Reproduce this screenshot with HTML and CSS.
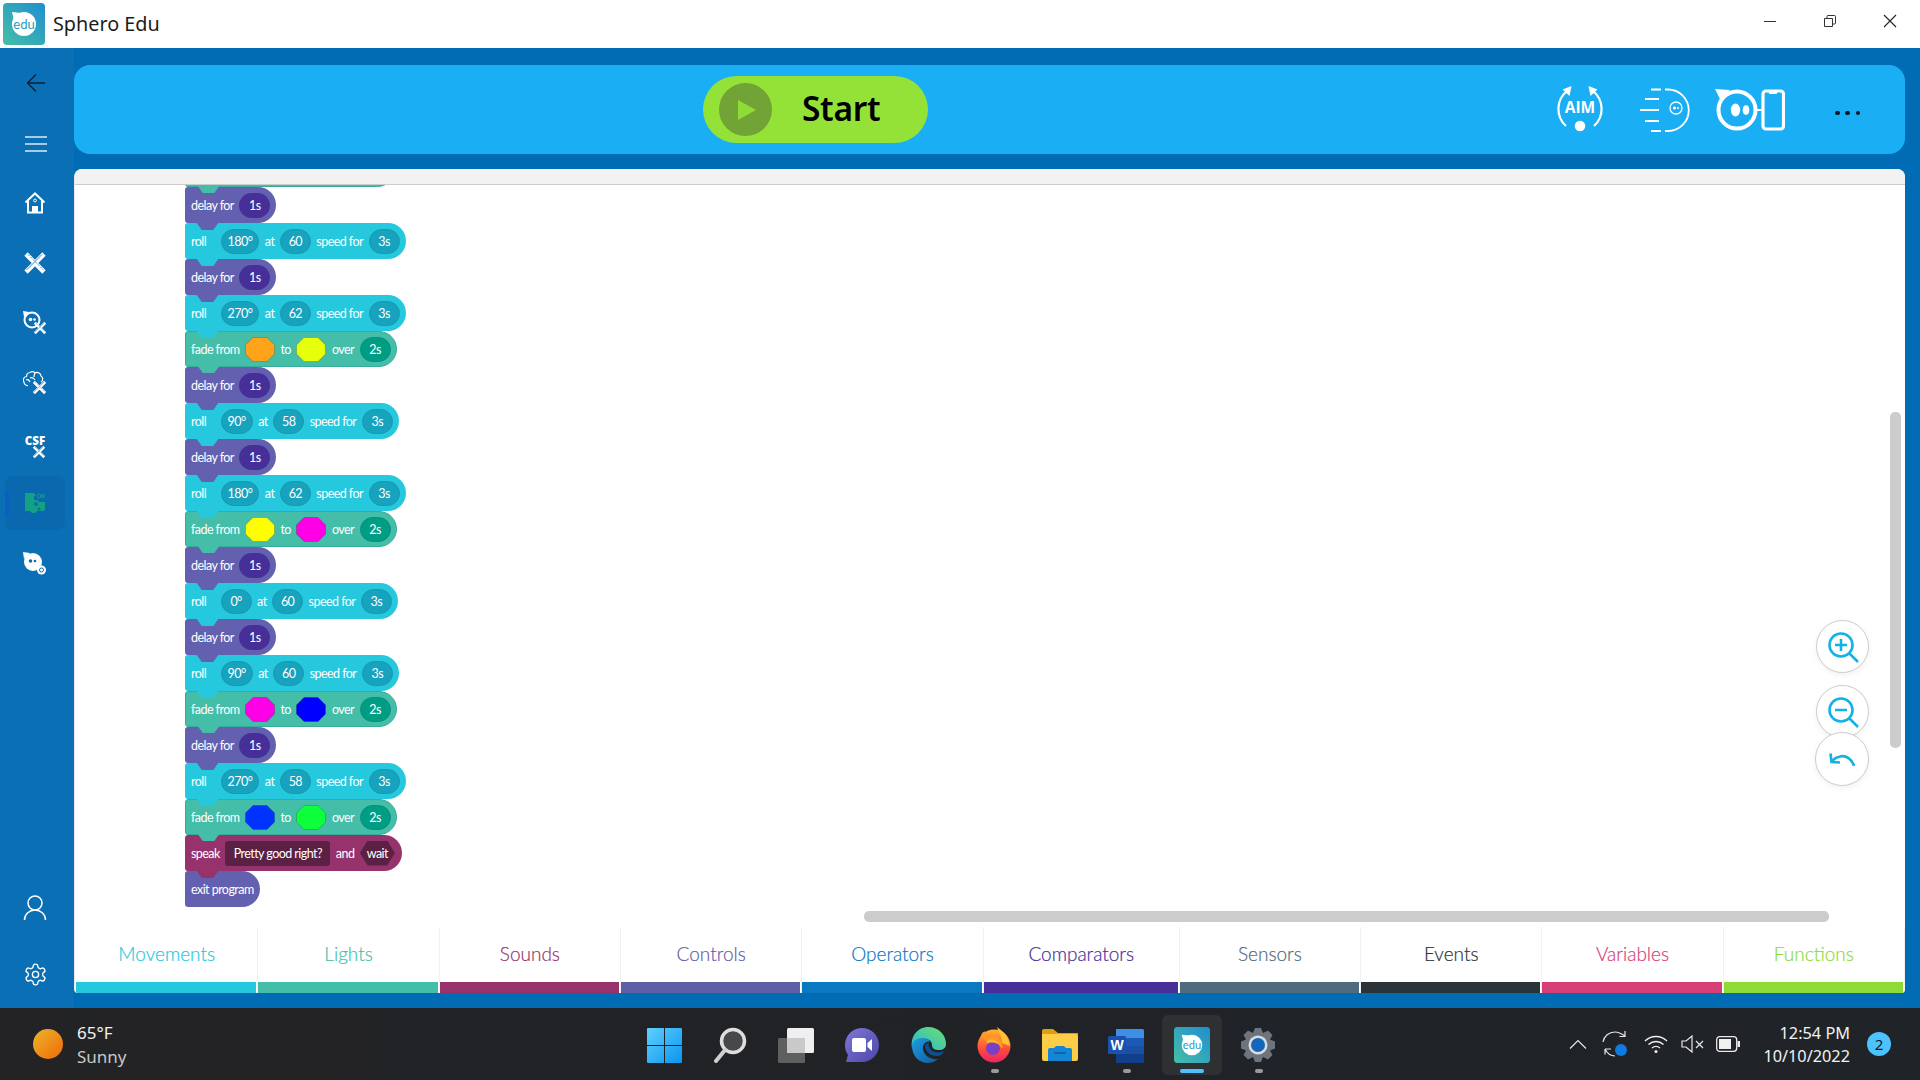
FILE: index.html
```html
<!DOCTYPE html>
<html lang="en">
<head>
  <meta charset="UTF-8" />
  <title>Sphero Edu</title>
  <link rel="stylesheet" href="styles.css">
</head>
<body>
  <svg class="svg-defs" aria-hidden="true">
    <defs>
      <linearGradient id="eduGrad" x1="1" y1="0" x2="0" y2="1">
        <stop offset="0" stop-color="#1f8fcf" />
        <stop offset="1" stop-color="#46bfa6" />
      </linearGradient>
      <linearGradient id="sunGrad" x1="0" y1="0" x2="1" y2="1">
        <stop offset="0" stop-color="#edb52b" />
        <stop offset="1" stop-color="#ee6a08" />
      </linearGradient>
      <linearGradient id="winGrad" x1="0" y1="0" x2="1" y2="1">
        <stop offset="0" stop-color="#5fd0ff" />
        <stop offset="1" stop-color="#0a95ee" />
      </linearGradient>
      <linearGradient id="chatGrad" x1="0" y1="0" x2="1" y2="1">
        <stop offset="0" stop-color="#7f78d8" />
        <stop offset="1" stop-color="#4b46a8" />
      </linearGradient>
      <linearGradient id="edgeGrad" x1="0" y1="0" x2="1" y2="1">
        <stop offset="0" stop-color="#1b9de2" />
        <stop offset="1" stop-color="#0f5aa0" />
      </linearGradient>
      <linearGradient id="edgeTop" x1="0" y1="1" x2="1" y2="0">
        <stop offset="0" stop-color="#23b6d8" />
        <stop offset="1" stop-color="#6fe06c" />
      </linearGradient>
      <linearGradient id="foxGrad" x1="0" y1="0" x2="0" y2="1">
        <stop offset="0" stop-color="#ffb52c" />
        <stop offset="0.6" stop-color="#ff4a3a" />
        <stop offset="1" stop-color="#e9256b" />
      </linearGradient>
      <symbol id="edu-logo" viewBox="0 0 42 42">
        <rect width="42" height="42" rx="4" fill="url(#eduGrad)" />
        <circle cx="21" cy="21" r="12" fill="#fff" />
        <path d="M9 9L18 10 11 17z" fill="#fff" />
        <text x="21" y="25.5" text-anchor="middle" class="edu-text">edu</text>
      </symbol>
      <symbol id="tool-x" viewBox="0 0 24 24">
        <path d="M3 3 L21 21 M21 3 L3 21" fill="none" stroke="#fff" stroke-width="4.6" />
        <path d="M5 3.500 L20.500 19" fill="none" stroke="#0a6db3" stroke-width="0.8" stroke-dasharray="2 1.500" />
        <path d="M19 3.500 L3.500 19" fill="none" stroke="#0a6db3" stroke-width="0.8" />
      </symbol>
      <symbol id="oct" viewBox="0 0 30 25">
        <polygon points="8,.5 22,.5 29.5,8 29.5,17 22,24.5 8,24.5 .5,17 .5,8" />
      </symbol>
    </defs>
  </svg>

  <div class="titlebar">
    <svg class="title-logo"><use href="#edu-logo" /></svg>
    <span class="title-text">Sphero Edu</span>
    <div class="win-controls">
      <div class="win-btn">
        <svg width="12" height="12" viewBox="0 0 12 12"><path d="M0 6.5H12" stroke="#333" fill="none" /></svg>
      </div>
      <div class="win-btn">
        <svg width="14" height="14" viewBox="0 0 14 14"><path d="M1.5 4.5h8v8h-8z M4 4.5V2.5a1 1 0 0 1 1-1h6.500a1 1 0 0 1 1 1V9a1 1 0 0 1-1 1h-2" stroke="#333" fill="none" /></svg>
      </div>
      <div class="win-btn">
        <svg width="14" height="14" viewBox="0 0 14 14"><path d="M1 1L13 13M13 1L1 13" stroke="#222" stroke-width="1.1" fill="none" /></svg>
      </div>
    </div>
  </div>

  <div class="app">
    <nav class="sidebar">
      <div class="nav-item">
        <svg class="nudge" width="20" height="20" viewBox="0 0 20 20"><path d="M19 10H2 M10 1.500L1.500 10 10 18.500" fill="none" stroke="#0d2236" stroke-width="1.500" /></svg>
      </div>
      <div class="nav-item">
        <svg class="nudge nudge-down" width="24" height="18" viewBox="0 0 24 18"><path d="M1 2H23 M1 9H23 M1 16H23" fill="none" stroke="#dbeaf5" stroke-width="1.500" /></svg>
      </div>
      <div class="nav-item">
        <svg width="22" height="22" viewBox="0 0 22 22">
          <path d="M1.500 10.500L11 1.500l9.500 9M4 9v11.500h14V9" fill="none" stroke="#fff" stroke-width="2" />
          <path d="M8 20.500v-6.500h6v6.500z" fill="#fff" />
          <circle cx="11" cy="8.500" r="1.400" fill="none" stroke="#fff" />
        </svg>
      </div>
      <div class="nav-item">
        <svg width="24" height="24"><use href="#tool-x" /></svg>
      </div>
      <div class="nav-item">
        <svg width="24" height="24" viewBox="0 0 24 24">
          <circle cx="9" cy="9" r="7.500" fill="none" stroke="#fff" stroke-width="2" />
          <path d="M0 0L6 1 1 6z" fill="#fff" />
          <circle cx="7.500" cy="8.500" r="1.800" fill="#fff" />
          <circle cx="11.500" cy="8.500" r="1.300" fill="#fff" />
          <svg x="10" y="10" width="14" height="14"><use href="#tool-x" /></svg>
        </svg>
      </div>
      <div class="nav-item">
        <svg width="24" height="24" viewBox="0 0 24 24">
          <path d="M7 1.500a4 4 0 0 1 5 .5 4 4 0 0 1 6 3 3.500 3.500 0 0 1 0 6 M7 1.500a4 4 0 0 0-3.500 4A3.500 3.500 0 0 0 1 11a3.500 3.500 0 0 0 4 3.500 M7 7c2-1 4 0 5 2 M3 9c2-1 3 0 4 2 M12 2c-1 2-1 3-1 4" fill="none" stroke="#fff" stroke-width="1.200" />
          <svg x="9" y="9" width="15" height="15"><use href="#tool-x" /></svg>
        </svg>
      </div>
      <div class="nav-item">
        <svg class="ico-csf" width="28" height="28" viewBox="0 -4 28 28">
          <text x="14" y="9.500" text-anchor="middle" class="csf-text">CSF</text>
          <svg x="11" y="10" width="14" height="14"><use href="#tool-x" /></svg>
        </svg>
      </div>
      <div class="nav-item nav-active">
        <span class="nav-mark"></span>
        <svg width="20" height="21" viewBox="0 0 20 21">
          <path d="M0 0h9l2 3h-2v4h3l2 2h6v8l-2 1h-6l-2 2H7l-2-2H0z" fill="#12a183" />
          <circle cx="14" cy="3" r="2" fill="none" stroke="#12a183" />
          <circle cx="18" cy="3" r="1.500" fill="none" stroke="#12a183" />
          <circle cx="11" cy="11" r="2" fill="#0a6db3" />
          <circle cx="14" cy="16" r="1.500" fill="#0a6db3" />
        </svg>
      </div>
      <div class="nav-item">
        <svg class="nudge-down" width="24" height="24" viewBox="0 0 24 24">
          <circle cx="10" cy="10" r="9" fill="#fff" />
          <path d="M0 0L7 1 1 7z" fill="#fff" />
          <circle cx="7.500" cy="9" r="1.800" fill="#0a6db3" />
          <circle cx="12" cy="9" r="1.300" fill="#0a6db3" />
          <circle cx="18.500" cy="18" r="4.500" fill="#fff" />
          <circle cx="18.500" cy="18" r="2" fill="none" stroke="#0a6db3" />
        </svg>
      </div>
      <div class="nav-item nav-user">
        <svg width="24" height="26" viewBox="0 0 24 26">
          <circle cx="12" cy="8" r="7" fill="none" stroke="#fff" stroke-width="1.500" />
          <path d="M1.500 25c0-6 5-10 10.500-10s10.500 4 10.500 10" fill="none" stroke="#fff" stroke-width="1.500" />
        </svg>
      </div>
      <div class="nav-item nav-gear">
        <svg width="25" height="25" viewBox="0 0 24 24" fill="none" stroke="#fff" stroke-width="1.300">
          <path d="M12.220 2h-.44a2 2 0 0 0-2 2v.18a2 2 0 0 1-1 1.730l-.43.250a2 2 0 0 1-2 0l-.15-.08a2 2 0 0 0-2.730.730l-.22.380a2 2 0 0 0 .730 2.730l.15.100a2 2 0 0 1 1 1.720v.510a2 2 0 0 1-1 1.740l-.15.090a2 2 0 0 0-.730 2.730l.22.380a2 2 0 0 0 2.730.730l.15-.08a2 2 0 0 1 2 0l.43.250a2 2 0 0 1 1 1.730V20a2 2 0 0 0 2 2h.44a2 2 0 0 0 2-2v-.18a2 2 0 0 1 1-1.730l.43-.25a2 2 0 0 1 2 0l.15.08a2 2 0 0 0 2.730-.73l.22-.39a2 2 0 0 0-.73-2.730l-.15-.08a2 2 0 0 1-1-1.740v-.5a2 2 0 0 1 1-1.740l.15-.09a2 2 0 0 0 .73-2.730l-.22-.38a2 2 0 0 0-2.730-.73l-.15.08a2 2 0 0 1-2 0l-.43-.25a2 2 0 0 1-1-1.730V4a2 2 0 0 0-2-2z" />
          <circle cx="12" cy="12" r="3" />
        </svg>
      </div>
    </nav>

    <main class="main">
      <header class="toolbar">
        <button class="start-btn">
          <span class="start-circle">
            <svg width="20" height="20" viewBox="0 0 20 20"><path d="M1 0L19 10 1 20z" fill="#8fdc38" /></svg>
          </span>
          <span class="start-label">Start</span>
        </button>
        <div class="tool-icons">
          <svg class="ico-aim" width="50" height="46" viewBox="0 0 50 46">
            <path d="M11 40A23 23 0 0 1 12 5M38 5A23 23 0 0 1 39 40" fill="none" stroke="#fff" stroke-width="2.200" />
            <path d="M16.500 0L14.500 10 7.500 3.500zM33.500 0L35.500 10l7-6.500z" fill="#fff" />
            <text x="25" y="27" text-anchor="middle" class="aim-text">AIM</text>
            <circle cx="25" cy="40" r="5.300" fill="#fff" />
          </svg>
          <svg class="ico-speed" width="51" height="44" viewBox="0 0 51 44">
            <path d="M12 1.500H22M6 11H20M1 22H20M6 33H20M12 43H22M26 1.500H29A20.700 20.700 0 0 1 29 43H26" fill="none" stroke="#fff" stroke-width="1.800" />
            <circle cx="37" cy="20" r="6" fill="none" stroke="#fff" stroke-width="1.300" />
            <circle cx="35.500" cy="20" r="1.500" fill="#fff" />
            <circle cx="39" cy="20" r="1" fill="#fff" />
          </svg>
          <svg class="ico-robot" width="70" height="42" viewBox="0 0 70 42">
            <circle cx="22" cy="21" r="18.500" fill="none" stroke="#fff" stroke-width="4" />
            <path d="M0 0L15 1 5 10z" fill="#fff" />
            <ellipse cx="20.500" cy="21" rx="4.700" ry="6.500" fill="#fff" />
            <ellipse cx="31" cy="21" rx="3.300" ry="4.800" fill="#fff" />
            <path d="M41 21H48" stroke="#fff" stroke-width="2" />
            <rect x="48" y="2" width="20.500" height="38" rx="3" fill="none" stroke="#fff" stroke-width="3.200" />
            <path d="M53 2.500h10l-1.500 2.500h-7z" fill="#fff" />
          </svg>
          <div class="more-dots"><span></span><span></span><span></span></div>
        </div>
      </header>

      <section class="panel">
        <div class="panel-strip"></div>
        <div class="canvas">
          <div class="block-list">
            <div class="block fade sliver"></div>

            <div class="block delay"><span>delay for</span><span class="pill">1s</span></div>
            <div class="block roll"><span class="roll-word">roll</span><span class="pill">180°</span><span>at</span><span class="pill">60</span><span>speed for</span><span class="pill">3s</span></div>
            <div class="block delay"><span>delay for</span><span class="pill">1s</span></div>
            <div class="block roll"><span class="roll-word">roll</span><span class="pill">270°</span><span>at</span><span class="pill">62</span><span>speed for</span><span class="pill">3s</span></div>
            <div class="block fade"><span>fade from</span><svg class="oct c-orange"><use href="#oct" /></svg><span>to</span><svg class="oct c-lime"><use href="#oct" /></svg><span>over</span><span class="pill">2s</span></div>
            <div class="block delay"><span>delay for</span><span class="pill">1s</span></div>
            <div class="block roll"><span class="roll-word">roll</span><span class="pill">90°</span><span>at</span><span class="pill">58</span><span>speed for</span><span class="pill">3s</span></div>
            <div class="block delay"><span>delay for</span><span class="pill">1s</span></div>
            <div class="block roll"><span class="roll-word">roll</span><span class="pill">180°</span><span>at</span><span class="pill">62</span><span>speed for</span><span class="pill">3s</span></div>
            <div class="block fade"><span>fade from</span><svg class="oct c-yellow"><use href="#oct" /></svg><span>to</span><svg class="oct c-magenta"><use href="#oct" /></svg><span>over</span><span class="pill">2s</span></div>
            <div class="block delay"><span>delay for</span><span class="pill">1s</span></div>
            <div class="block roll"><span class="roll-word">roll</span><span class="pill">0°</span><span>at</span><span class="pill">60</span><span>speed for</span><span class="pill">3s</span></div>
            <div class="block delay"><span>delay for</span><span class="pill">1s</span></div>
            <div class="block roll"><span class="roll-word">roll</span><span class="pill">90°</span><span>at</span><span class="pill">60</span><span>speed for</span><span class="pill">3s</span></div>
            <div class="block fade"><span>fade from</span><svg class="oct c-magenta"><use href="#oct" /></svg><span>to</span><svg class="oct c-blue"><use href="#oct" /></svg><span>over</span><span class="pill">2s</span></div>
            <div class="block delay"><span>delay for</span><span class="pill">1s</span></div>
            <div class="block roll"><span class="roll-word">roll</span><span class="pill">270°</span><span>at</span><span class="pill">58</span><span>speed for</span><span class="pill">3s</span></div>
            <div class="block fade"><span>fade from</span><svg class="oct c-blue2"><use href="#oct" /></svg><span>to</span><svg class="oct c-green"><use href="#oct" /></svg><span>over</span><span class="pill">2s</span></div>
            <div class="block speak"><span>speak</span><span class="say-box">Pretty good right?</span><span>and</span><span class="wait-hex">wait</span></div>
            <div class="block delay last"><span>exit program</span></div>
          </div>

          <div class="scroll-v"></div>
          <div class="scroll-h"></div>

          <div class="zoom-tools">
            <div class="zoom-btn">
              <svg width="34" height="34" viewBox="0 0 34 34" fill="none" stroke="#12b1e6" stroke-width="2.600"><circle cx="14" cy="14" r="11.500" /><path d="M22.500 22.500L31 31M14 8V20M8 14H20" /></svg>
            </div>
            <div class="zoom-btn">
              <svg width="34" height="34" viewBox="0 0 34 34" fill="none" stroke="#12b1e6" stroke-width="2.600"><circle cx="14" cy="14" r="11.500" /><path d="M22.500 22.500L31 31M8 14H20" /></svg>
            </div>
            <div class="zoom-btn reset-btn">
              <svg width="26" height="16" viewBox="0 0 26 16" fill="none" stroke="#12b1e6" stroke-width="2.600"><path d="M25 15C23 8 17 4 11 5.500 8 6 5 8 3 10" /><path d="M1.500 2.500L2.500 11 11 11.500" /></svg>
            </div>
          </div>
        </div>

        <div class="tabs">
          <div class="tab tab-movements"><span class="tab-label">Movements</span><span class="tab-bar"></span></div>
          <div class="tab tab-lights"><span class="tab-label">Lights</span><span class="tab-bar"></span></div>
          <div class="tab tab-sounds"><span class="tab-label">Sounds</span><span class="tab-bar"></span></div>
          <div class="tab tab-controls"><span class="tab-label">Controls</span><span class="tab-bar"></span></div>
          <div class="tab tab-operators"><span class="tab-label">Operators</span><span class="tab-bar"></span></div>
          <div class="tab tab-comparators"><span class="tab-label">Comparators</span><span class="tab-bar"></span></div>
          <div class="tab tab-sensors"><span class="tab-label">Sensors</span><span class="tab-bar"></span></div>
          <div class="tab tab-events"><span class="tab-label">Events</span><span class="tab-bar"></span></div>
          <div class="tab tab-variables"><span class="tab-label">Variables</span><span class="tab-bar"></span></div>
          <div class="tab tab-functions"><span class="tab-label">Functions</span><span class="tab-bar"></span></div>
        </div>
      </section>
    </main>
  </div>

  <footer class="taskbar">
    <div class="weather">
      <svg width="30" height="30" viewBox="0 0 30 30"><circle cx="15" cy="15" r="15" fill="url(#sunGrad)" /></svg>
      <div class="weather-text">
        <div class="temp">65°F</div>
        <div class="cond">Sunny</div>
      </div>
    </div>

    <div class="task-icons">
      <div class="task-item">
        <svg width="35" height="35" viewBox="0 0 35 35" fill="url(#winGrad)">
          <path d="M1 0H17V17H0V1a1 1 0 0 1 1-1zM18 0H34a1 1 0 0 1 1 1V17H18zM0 18H17V35H1a1 1 0 0 1-1-1zM18 18H35V34a1 1 0 0 1-1 1H18z" />
        </svg>
      </div>
      <div class="task-item">
        <svg width="34" height="36" viewBox="0 0 34 36">
          <circle cx="20" cy="14" r="11.500" fill="#48484a" stroke="#dedede" stroke-width="3.500" />
          <path d="M12 23L3 34" stroke="#d0d0d0" stroke-width="4" stroke-linecap="round" />
        </svg>
      </div>
      <div class="task-item">
        <svg width="36" height="35" viewBox="0 0 36 35">
          <rect x="9" y="0" width="27" height="25" rx="1.500" fill="#efefef" />
          <rect x="0" y="10" width="27" height="25" rx="1.500" fill="#6a6a6a" fill-opacity=".85" />
          <rect x="9" y="10" width="18" height="15" fill="#c9c9c9" />
        </svg>
      </div>
      <div class="task-item">
        <svg width="34" height="34" viewBox="0 0 34 34">
          <path d="M17 0C26 0 34 7 34 17S26 34 17 34H1L3 27C1 24 0 21 0 17 0 7 8 0 17 0z" fill="url(#chatGrad)" />
          <rect x="7" y="10" width="14" height="14" rx="2" fill="#fff" />
          <path d="M22.500 15L27 11V23L22.500 19z" fill="#fff" />
        </svg>
      </div>
      <div class="task-item">
        <svg width="36" height="36" viewBox="0 0 36 36">
          <path d="M18 0C29 0 36 8 36 17 36 21 33 23 29 23 24 23 22 21 22 18 22 13 17 11 12 12 6 14 3 18 2 21 0 9 8 0 18 0z" fill="url(#edgeTop)" />
          <path d="M2 19C2 15 6 11 12 11 16 11 20 13 20 15 16 14 13 17 13 21 13 28 20 33 28 32 24 35 21 36 18 36 8 36 2 28 2 19z" fill="url(#edgeGrad)" />
          <path d="M15 19C15 24 20 29 27 29 30 29 33 27 34 24 30 26 24 26 21 23 19 21 18 18 19 16 17 16 15 17 15 19z" fill="#0e4f94" />
        </svg>
      </div>
      <div class="task-item">
        <svg width="34" height="36" viewBox="0 0 34 36">
          <circle cx="17" cy="19" r="16.500" fill="url(#foxGrad)" />
          <path d="M20 0C27 5 32 10 33 19L25 16C25 10 22 6 20 0z" fill="#ffc233" />
          <path d="M4 8C6 4 8 4 9 5 7 8 8 10 11 11 15 9 21 10 24 14L26 21 10 15z" fill="#ff9a1f" />
          <circle cx="16" cy="21" r="7" fill="#7a3fc4" />
          <path d="M10 14C15 11 21 13 23 19 21 16 14 14 10 17z" fill="#ffb42a" />
        </svg>
      </div>
      <div class="task-item">
        <svg width="36" height="32" viewBox="0 0 36 32">
          <path d="M0 2a2 2 0 0 1 2-2H11L16 4H36V6H0z" fill="#d9a012" />
          <path d="M0 5H34a2 2 0 0 1 2 2V30a2 2 0 0 1-2 2H2a2 2 0 0 1-2-2z" fill="#fdcd48" />
          <path d="M6 32V21a2 2 0 0 1 2-2H12L14 17H22L24 19H28a2 2 0 0 1 2 2V32z" fill="#1586d6" />
          <path d="M12 24H24" stroke="#0c5a9e" stroke-width="1.500" />
        </svg>
      </div>
      <div class="task-item">
        <svg width="36" height="36" viewBox="0 0 36 36">
          <rect x="8" y="2" width="28" height="34" rx="2" fill="#2a6fd0" />
          <rect x="8" y="11" width="28" height="8" fill="#1d5ab8" />
          <rect x="8" y="19" width="28" height="8" fill="#1a4fa6" />
          <path d="M8 27H36V34a2 2 0 0 1-2 2H10a2 2 0 0 1-2-2z" fill="#123f8a" />
          <path d="M8 2H34a2 2 0 0 1 2 2V11H8z" fill="#3e8ee6" />
          <rect x="0" y="9" width="18" height="18" rx="1.500" fill="#1a50ae" />
          <text x="9" y="23" text-anchor="middle" class="word-text">W</text>
        </svg>
      </div>
      <div class="task-item task-active">
        <svg width="36" height="36"><use href="#edu-logo" /></svg>
        <span class="task-run"></span>
      </div>
      <div class="task-item">
        <svg width="36" height="36" viewBox="0 0 36 36">
          <path d="M15 1H21L23 6 28 3.500 32.500 8 30 12.500 35 14.500V21.500L30 23.500 32.500 28 28 32.500 23 30 21 35H15L13 30 8 32.500 3.500 28 6 23.500 1 21.500V14.500L6 12.500 3.500 8 8 3.500 13 6z" fill="#6d747c" />
          <circle cx="18" cy="18" r="9.500" fill="#d8dde2" />
          <circle cx="18" cy="18" r="7" fill="#1366b8" />
        </svg>
      </div>
      <span class="run-dot dot-fox"></span>
      <span class="run-dot dot-word"></span>
      <span class="run-dot dot-gear"></span>
    </div>

    <div class="tray">
      <svg class="tray-chevron" width="18" height="10" viewBox="0 0 18 10"><path d="M1 9.500L9 1.500l8 8" fill="none" stroke="#e8e8e8" stroke-width="1.200" /></svg>
      <svg class="tray-sync" width="26" height="26" viewBox="0 0 26 26">
        <path d="M1 11C2 5 7 1 13 1 17 1 20 3 23 5M23 0V5.500H17.500M3 18H9M3 18V23.500M3 18C5 22 8 25 13 25" fill="none" stroke="#e8e8e8" stroke-width="1.200" />
        <circle cx="19" cy="19" r="6" fill="#0f7ae0" />
      </svg>
      <svg class="tray-wifi" width="24" height="20" viewBox="0 0 24 20" fill="none" stroke="#f0f0f0" stroke-width="1.400">
        <path d="M1 7C7 1 17 1 23 7M4.500 10.500C9 6.500 15 6.500 19.500 10.500M8 14C10.500 12 13.500 12 16 14" />
        <circle cx="12" cy="17.500" r="1.500" fill="#f0f0f0" stroke="none" />
      </svg>
      <svg class="tray-sound" width="23" height="18" viewBox="0 0 23 18" fill="none" stroke="#e8e8e8" stroke-width="1.200">
        <path d="M1 6H5L11 1V17L5 12H1zM15 6L22 13M22 6L15 13" />
      </svg>
      <svg class="tray-battery" width="24" height="16" viewBox="0 0 24 16">
        <rect x=".7" y=".7" width="20" height="14.600" rx="3" fill="none" stroke="#e8e8e8" stroke-width="1.300" />
        <rect x="3" y="3" width="12" height="10" fill="#f0f0f0" />
        <rect x="21.500" y="5" width="2.500" height="6" fill="#e8e8e8" />
      </svg>
      <div class="clock">
        <div>12:54 PM</div>
        <div>10/10/2022</div>
      </div>
      <div class="badge">2</div>
    </div>
  </footer>
</body>
</html>
```

FILE: styles.css
```css
* {
  box-sizing: border-box;
}

body {
  margin: 0;
  width: 1920px;
  height: 1080px;
  overflow: hidden;
  font-family: "Noto Sans", sans-serif;
  background: #016cb3;
  display: flex;
  flex-direction: column;
}

.svg-defs {
  position: absolute;
  width: 0;
  height: 0;
}

.edu-text {
  font-family: Lato, sans-serif;
  font-size: 13px;
  fill: #1e9cc4;
}

/* title bar */

.titlebar {
  height: 48px;
  background: #fff;
  display: flex;
  align-items: center;
  padding-left: 3px;
}

.title-logo {
  width: 42px;
  height: 42px;
}

.title-text {
  margin: -2px 0 0 8px;
  font-size: 19.8px;
  color: #1c1c1c;
}

.win-controls {
  display: flex;
  margin-left: auto;
  align-self: flex-start;
}

.win-btn {
  width: 60px;
  height: 42px;
  display: flex;
  align-items: center;
  justify-content: center;
}

/* main app */

.app {
  flex: 1;
  display: flex;
  min-height: 0;
}

.sidebar {
  width: 74px;
  padding: 5px 9px 4px 5px;
  display: flex;
  flex-direction: column;
  background: #0a6fb5;
}

.nav-item {
  position: relative;
  width: 60px;
  height: 60px;
  flex-shrink: 0;
  display: flex;
  align-items: center;
  justify-content: center;
}

.nudge {
  margin-left: 2px;
}

.nudge-down {
  margin-top: 2px;
}

.ico-csf {
  margin-top: 4px;
}

.nav-active {
  height: 54px;
  margin: 3px 0;
  border-radius: 8px;
  background: #0a69ae;
}

.nav-mark {
  position: absolute;
  left: 0;
  top: 16px;
  width: 4px;
  height: 23px;
  background: #0b5fbd;
}

.nav-user {
  margin-top: auto;
}

.nav-gear {
  margin-top: 6px;
}

.csf-text {
  font-family: "Open Sans", sans-serif;
  font-weight: 800;
  font-size: 11.5px;
  fill: #fff;
}

.main {
  flex: 1;
  padding: 17px 15px 15px 0;
  display: flex;
  flex-direction: column;
  gap: 15px;
}

.toolbar {
  height: 89px;
  background: #1aaef4;
  border-radius: 16px;
  display: flex;
  align-items: center;
  padding: 0 45px 0 629px;
}

.start-btn {
  width: 225px;
  height: 67px;
  padding: 0 0 0 16px;
  border: none;
  border-radius: 34px;
  background: #94e238;
  display: flex;
  align-items: center;
  font-family: inherit;
}

.start-circle {
  width: 53px;
  height: 53px;
  border-radius: 50%;
  background: #72a336;
  display: flex;
  align-items: center;
  justify-content: center;
  padding-left: 3px;
}

.start-label {
  margin: -4px 0 0 30px;
  font-size: 33.5px;
  font-weight: 600;
  letter-spacing: -0.3px;
  color: #000;
}

.tool-icons {
  margin-left: auto;
  display: flex;
  align-items: center;
}

.ico-aim {
  margin-top: -2px;
}

.ico-speed {
  margin-left: 34px;
}

.ico-robot {
  margin-left: 25.5px;
}

.more-dots {
  margin: 7px 0 0 50px;
  width: 25px;
  display: flex;
  justify-content: space-between;
}

.more-dots span {
  width: 4.5px;
  height: 4.5px;
  border-radius: 50%;
  background: #0a1a26;
}

.aim-text {
  font-family: "Open Sans", sans-serif;
  font-weight: 700;
  font-size: 15.5px;
  fill: #fff;
}

/* workspace */

.panel {
  flex: 1;
  min-height: 0;
  background: #fff;
  border-radius: 8px 8px 4px 4px;
  border-left: 1px solid #e9e9e9;
  display: flex;
  flex-direction: column;
  overflow: hidden;
}

.panel-strip {
  height: 16px;
  flex-shrink: 0;
  background: #f2f2f2;
  border-bottom: 1px solid #ccc;
}

.canvas {
  position: relative;
  flex: 1;
  min-height: 0;
  overflow: hidden;
}

.block-list {
  display: flex;
  flex-direction: column;
  align-items: flex-start;
  padding-left: 110px;
  margin-top: -33px;
}

.block {
  position: relative;
  height: 36px;
  padding: 0 6px;
  display: flex;
  align-items: center;
  gap: 5.5px;
  border-radius: 3px 18px 18px 3px;
  font-family: Lato, sans-serif;
  font-size: 12.5px;
  letter-spacing: -0.55px;
  color: #fff;
  white-space: nowrap;
}

.block::after {
  content: "";
  position: absolute;
  z-index: 1;
  left: 11px;
  bottom: -7px;
  width: 23px;
  height: 8px;
  background: inherit;
  clip-path: polygon(0 0, 100% 0, 75% 100%, 25% 100%);
}

.block.last::after {
  display: none;
}

.sliver {
  width: 210px;
  height: 35px;
}

.delay {
  background: #6460b0;
}

.delay .pill {
  background: #472f9a;
}

.roll {
  background: #26c8de;
}

.roll .pill {
  background: #17a2bd;
  border: 1px solid #1899b0;
}

.roll-word {
  margin-right: 9px;
}

.fade {
  background: #45bea9;
  border: 1px solid #35ad98;
  padding: 0 5px;
}

.fade .pill {
  background: #009d85;
  border: 1px solid #0b8f7b;
}

.speak {
  background: #96336c;
  padding-right: 7px;
}

.pill {
  min-width: 31px;
  height: 25px;
  padding: 0 6px;
  border-radius: 13px;
  display: flex;
  align-items: center;
  justify-content: center;
}

.oct {
  width: 30px;
  height: 25px;
  stroke: rgba(0, 0, 0, 0.18);
}

.c-orange {
  fill: #ffa31a;
}

.c-lime {
  fill: #e6ff0a;
}

.c-yellow {
  fill: #ffff00;
}

.c-magenta {
  fill: #ff00e6;
}

.c-blue {
  fill: #0000ff;
}

.c-blue2 {
  fill: #0033ff;
}

.c-green {
  fill: #0dff3c;
}

.say-box {
  height: 25px;
  width: 105px;
  border-radius: 3px;
  background: #5b2145;
  display: flex;
  align-items: center;
  justify-content: center;
}

.wait-hex {
  width: 35px;
  height: 25px;
  background: #5b2145;
  clip-path: polygon(22% 0, 78% 0, 100% 50%, 78% 100%, 22% 100%, 0 50%);
  display: flex;
  align-items: center;
  justify-content: center;
}

.scroll-v {
  position: absolute;
  right: 4px;
  top: 227px;
  width: 11px;
  height: 336px;
  border-radius: 5px;
  background: #ccc;
}

.scroll-h {
  position: absolute;
  left: 789px;
  right: 76px;
  bottom: 5px;
  height: 11px;
  border-radius: 5px;
  background: #ccc;
}

.zoom-tools {
  position: absolute;
  right: 35px;
  top: 435px;
  display: flex;
  flex-direction: column;
  align-items: center;
  gap: 12px;
}

.zoom-btn {
  width: 53px;
  height: 53px;
  border-radius: 50%;
  background: #fff;
  border: 1px solid #ccc;
  box-shadow: 0 2px 6px rgba(0, 0, 0, 0.06);
  display: flex;
  align-items: center;
  justify-content: center;
  padding: 3px 0 0 3px;
}

.reset-btn {
  width: 54px;
  height: 54px;
  margin: -18px 1px 0 0;
  padding: 0;
  position: relative;
}

.tabs {
  height: 66px;
  flex-shrink: 0;
  margin-left: 1px;
  display: grid;
  grid-template-columns: 182.4px repeat(4, 1fr) 196px repeat(4, 1fr);
}

.tab {
  display: flex;
  flex-direction: column;
  border-right: 1px solid #f1f1f1;
}

.tab-label {
  flex: 1;
  display: flex;
  align-items: center;
  justify-content: center;
  padding-bottom: 2px;
  font-family: Lato, sans-serif;
  font-weight: 300;
  font-size: 19px;
  -webkit-text-stroke: 0.2px;
}

.tab-bar {
  height: 11px;
  border-right: 1px solid #fff;
}

.tab-movements .tab-label { color: #26c8de; }
.tab-movements .tab-bar { background: #26c8de; }
.tab-lights .tab-label { color: #45bea9; }
.tab-lights .tab-bar { background: #45bea9; }
.tab-sounds .tab-label { color: #96336c; }
.tab-sounds .tab-bar { background: #96336c; }
.tab-controls .tab-label { color: #5f5fa8; }
.tab-controls .tab-bar { background: #5f5fa8; }
.tab-operators .tab-label { color: #0b78c2; }
.tab-operators .tab-bar { background: #0b78c2; }
.tab-comparators .tab-label { color: #472f9a; }
.tab-comparators .tab-bar { background: #472f9a; }
.tab-sensors .tab-label { color: #4f6b7e; }
.tab-sensors .tab-bar { background: #4f6b7e; }
.tab-events .tab-label { color: #2b333a; }
.tab-events .tab-bar { background: #2b333a; }
.tab-variables .tab-label { color: #d63f76; }
.tab-variables .tab-bar { background: #d63f76; }
.tab-functions .tab-label { color: #8fdb35; }
.tab-functions .tab-bar { background: #8fdb35; }

/* taskbar */

.taskbar {
  height: 72px;
  background: linear-gradient(90deg, #232325, #202226 50%, #1f2429);
  display: flex;
  align-items: center;
  color: #fff;
}

.weather {
  width: 631px;
  padding-left: 33px;
  display: flex;
  align-items: center;
  gap: 14px;
}

.weather-text {
  padding-top: 2px;
  line-height: 24px;
  font-size: 17px;
}

.temp {
  color: #f2f2f2;
}

.cond {
  color: #c8c8c8;
}

.task-icons {
  position: relative;
  display: flex;
  height: 72px;
}

.task-item {
  position: relative;
  width: 66px;
  height: 72px;
  display: flex;
  align-items: center;
  justify-content: center;
  padding-top: 2px;
}

.task-active::before {
  content: "";
  position: absolute;
  left: 3px;
  right: 3px;
  top: 7px;
  bottom: 5px;
  border-radius: 6px;
  background: #2f3032;
}

.task-active svg {
  position: relative;
}

.task-run {
  position: absolute;
  left: 21px;
  bottom: 7px;
  width: 24px;
  height: 4px;
  border-radius: 2px;
  background: #4cc2ff;
}

.run-dot {
  position: absolute;
  bottom: 7px;
  width: 8px;
  height: 4px;
  border-radius: 2px;
  background: #9a9a9a;
}

.dot-fox {
  left: 360px;
}

.dot-word {
  left: 492px;
}

.dot-gear {
  left: 624px;
}

.tray {
  margin-left: auto;
  padding-right: 29px;
  display: flex;
  align-items: center;
}

.tray-sync {
  margin-left: 15px;
}

.tray-wifi {
  margin-left: 15.5px;
}

.tray-sound {
  margin-left: 13px;
}

.tray-battery {
  margin-left: 12.5px;
}

.clock {
  width: 98px;
  margin-left: 12px;
  padding-top: 2px;
  text-align: right;
  font-size: 16.3px;
  line-height: 23px;
  color: #f2f2f2;
}

.badge {
  width: 24px;
  height: 24px;
  margin-left: 17px;
  border-radius: 50%;
  background: #4cc2ff;
  color: #10202c;
  font-size: 15px;
  display: flex;
  align-items: center;
  justify-content: center;
}

.word-text {
  font-family: "Liberation Sans", sans-serif;
  font-weight: 700;
  font-size: 14px;
  fill: #fff;
}
```
